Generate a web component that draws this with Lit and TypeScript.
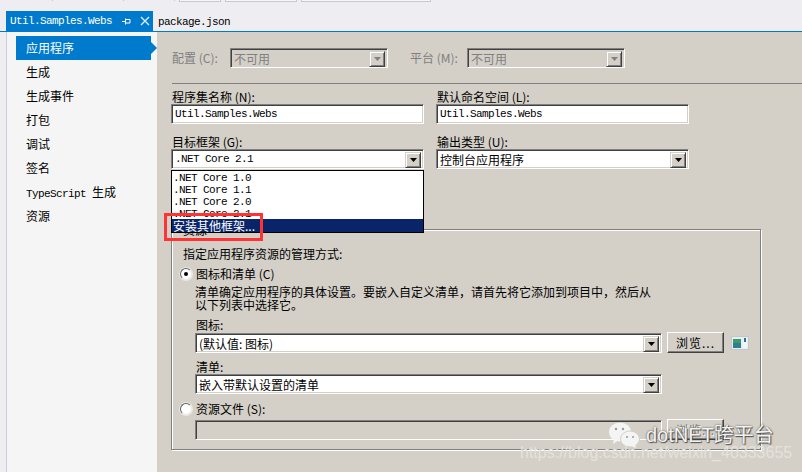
import { LitElement, html, css } from "lit";
import { customElement } from "lit/decorators.js";

const arrow = html`<svg width="7" height="4" viewBox="0 0 7 4"><path d="M0 0h7L3.5 4z" fill="currentColor"/></svg>`;

@customElement("app-root")
export class AppRoot extends LitElement {
  static styles = css`
    :host { display: block; width: 802px; height: 472px; overflow: hidden; position: relative; background: #d4d0c8; color: #000;
      font: 12px/14px "Noto Sans CJK SC", "Liberation Sans", sans-serif; }
    * { box-sizing: border-box; }
    .m { font-family: "Liberation Mono", "Noto Sans CJK SC", monospace; font-size: 11px; letter-spacing: -0.6px; }
    .top { height: 31px; background: #eeeef2; }
    .strip { height: 2px; display: flex; }
    .tick { width: 1px; height: 1px; background: #c8c8d0; }
    .box { height: 2px; background: #f6f6f8; border: 1px solid #c8c8d0; border-top: 0; }
    .tabs { display: flex; padding: 9px 0 0 6px; }
    .tab { width: 147px; height: 20px; background: #007acc; color: #fff; display: flex; align-items: center; padding-left: 4px; }
    .tab .name { width: 112px; }
    .tab svg { display: block; }
    .tab .pin { margin-right: 9px; }
    .other { padding: 3px 0 0 5px; line-height: 16px; }
    .main { display: flex; height: 441px; border-top: 1px solid #007acc; }
    .gut { width: 7px; background: #eeeef2; border-right: 1px solid #ccccde; }
    .side { width: 150px; background: #f5f5f5; padding: 4px 6px 0 9px; }
    .item { height: 24px; padding-left: 10px; line-height: 24px; position: relative; }
    .item.on { background: #007acc; color: #fff; }
    .item.on::after { content: ""; position: absolute; left: 135px; top: 6px; border-left: 6px solid #007acc; border-top: 6px solid transparent; border-bottom: 6px solid transparent; }
    .content { flex: 1; padding-left: 14px; position: relative; }
    .dis { color: #808080; }
    .row1 { display: flex; height: 51px; padding: 16px 0 15px; align-items: center; }
    .row1 .l1 { width: 59px; padding-left: 1px; }
    .row1 .l2 { width: 58px; margin-left: 21px; padding-left: 1px; }
    .sep { height: 1px; background: #808080; margin: 0 0 0 1px; }
    .grid { display: grid; grid-template-columns: 253px 253px; column-gap: 12px; padding-top: 5px; }
    .lab { height: 15px; line-height: 15px; padding-left: 1px; }
    .field { height: 20px; background: #fff; border: 1px solid; border-color: #808080 #fff #fff #808080; box-shadow: inset 1px 1px 0 #404040, inset -1px -1px 0 #d4d0c8; padding: 1px 0 0 3px; line-height: 17px; margin-bottom: 10px; position: relative; display: flex; align-items: center; white-space: nowrap; }
    .combo { padding-right: 20px; }
    .combo.gray { background: #d4d0c8; }
    .btn { position: absolute; right: 2px; top: 2px; width: 16px; height: 16px; background: #d4d0c8; color: #000; border: 1px solid; border-color: #d4d0c8 #404040 #404040 #d4d0c8; box-shadow: inset 1px 1px 0 #fff, inset -1px -1px 0 #808080; display: flex; align-items: center; justify-content: center; }
    .gray .btn { color: #808080; }
    .row1 .field { width: 158px; margin: 0; }
    .group { position: absolute; left: 14px; top: 197px; width: 590px; height: 221px; border: 1px solid #808080; box-shadow: 1px 1px 0 #fff, inset 1px 1px 0 #fff; padding: 17px 0 0 11px; }
    .legend { position: absolute; left: 9px; top: -7px; background: #d4d0c8; padding: 0 2px; }
    .radio { display: flex; align-items: center; gap: 4px; height: 14px; margin-left: -3px; }
    .dot { width: 12px; height: 12px; border-radius: 50%; background: #fff; border: 1px solid; border-color: #606060 #e8e8e8 #e8e8e8 #606060; box-shadow: 0 0 0 1px rgba(255,255,255,.5); display: flex; align-items: center; justify-content: center; flex: none; }
    .dot i { width: 4px; height: 4px; border-radius: 50%; background: #000; display: block; }
    .r1 { margin-top: 6px; }
    .r2 { margin-top: 8px; }
    .indent { padding-left: 12px; width: 566px; }
    .last { margin-top: 3px; }
    .desc { line-height: 13px; margin-top: 4px; }
    .sub { margin-top: 6px; height: 15px; line-height: 15px; padding-left: 1px; }
    .line { display: flex; align-items: center; }
    .line .field { width: 467px; height: 20px; margin: 0; }
    .field.blank { background: #d4d0c8; }
    .push { font: inherit; color: inherit; padding: 0; width: 57px; height: 21px; margin-left: 5px; background: #d4d0c8; border: 1px solid; border-color: #fff #404040 #404040 #fff; box-shadow: inset -1px -1px 0 #808080; display: flex; align-items: center; justify-content: center; letter-spacing: 1px; flex: none; }
    .push.off { color: #808080; text-shadow: 1px 1px 0 #fff; }
    .ico { width: 18px; height: 14px; margin-left: 7px; display: block; flex: none; }
    .list { position: absolute; left: 14px; top: 138px; width: 253px; height: 63px; background: #fff; border: 1px solid #000; padding-top: 1px; z-index: 2; overflow: hidden; }
    .opt { height: 12px; line-height: 12px; padding-left: 1px; }
    .opt.hl { position: absolute; left: 0; right: 0; bottom: 0; height: 13px; background: #0a246a; color: #fff; padding-left: 1px; font: 12px/13px "Noto Sans CJK SC", "Liberation Mono", sans-serif; letter-spacing: 0; }
    .red { position: absolute; left: 164px; top: 213px; width: 99px; height: 28px; border: 3px solid #f33; z-index: 3; }
    .brand { position: absolute; left: 609px; top: 422px; display: flex; align-items: center; gap: 6px; color: #f2f2f2; font: 20px/27px "Liberation Sans", "Noto Sans CJK SC", sans-serif; text-shadow: 0 0 2px #444, 1px 1px 1px #555; z-index: 4; white-space: nowrap; }
    .brand svg { display: block; }
    .url { position: absolute; left: 520px; top: 442px; font: 16px/22px "Liberation Sans", sans-serif; color: #e4e2dd; white-space: nowrap; z-index: 4; }
  `;

  private combo(text: string, mono = false, gray = false) {
    return html`<div class="field combo ${gray ? "gray dis" : ""} ${mono ? "m" : ""}">${text}<span class="btn">${arrow}</span></div>`;
  }

  render() {
    const items = ["应用程序", "生成", "生成事件", "打包", "调试", "签名", "TypeScript 生成", "资源"];
    return html`
      <div class="top">
        <div class="strip">
          <span class="tick" style="margin-left:52px"></span>
          <span class="tick" style="margin-left:70px"></span>
          <span class="tick" style="margin-left:50px"></span>
          <span class="box" style="margin-left:4px;width:42px"></span>
          <span class="box" style="margin-left:4px;width:72px"></span>
          <span class="box" style="margin-left:4px;width:130px"></span>
        </div>
        <div class="tabs">
          <div class="tab m">
            <span class="name">Util.Samples.Webs</span>
            <svg class="pin" width="9" height="9" viewBox="0 0 9 9" fill="none" stroke="#fff"><path d="M0 4.5h3M3.5 1.5v6M3.5 2.5h4.5M3.5 6h4.5M8 2.5v3.5"/></svg>
            <svg width="10" height="10" viewBox="0 0 10 10" stroke="#dcecf8" stroke-width="1.4"><path d="M1 1l8 8M9 1l-8 8"/></svg>
          </div>
          <div class="other m">package.json</div>
        </div>
      </div>
      <div class="main">
        <div class="gut"></div>
        <div class="side">
          ${items.map((t, i) => html`<div class="item ${i === 0 ? "on" : ""}">${i === 6
            ? html`<span class="m">TypeScript </span>生成`
            : t}</div>`)}
        </div>
        <div class="content">
          <div class="row1 dis">
            <span class="l1">配置 (C):</span>
            ${this.combo("不可用", false, true)}
            <span class="l2">平台 (M):</span>
            ${this.combo("不可用", false, true)}
          </div>
          <div class="sep"></div>
          <div class="grid">
            <div>
              <div class="lab">程序集名称 (N):</div>
              <div class="field m">Util.Samples.Webs</div>
              <div class="lab">目标框架 (G):</div>
              ${this.combo(".NET Core 2.1", true)}
            </div>
            <div>
              <div class="lab">默认命名空间 (L):</div>
              <div class="field m">Util.Samples.Webs</div>
              <div class="lab">输出类型 (U):</div>
              ${this.combo("控制台应用程序")}
            </div>
          </div>
          <div class="list m">
            <div class="opt">.NET Core 1.0</div>
            <div class="opt">.NET Core 1.1</div>
            <div class="opt">.NET Core 2.0</div>
            <div class="opt">.NET Core 2.1</div>
            <div class="opt hl">安装其他框架...</div>
          </div>
          <div class="group">
            <span class="legend">资源</span>
            <div>指定应用程序资源的管理方式:</div>
            <div class="radio r1"><span class="dot"><i></i></span>图标和清单 (C)</div>
            <div class="indent">
              <div class="desc">清单确定应用程序的具体设置。要嵌入自定义清单，请首先将它添加到项目中，然后从<br />以下列表中选择它。</div>
              <div class="sub">图标:</div>
              <div class="line">${this.combo("(默认值: 图标)")}<button class="push">浏览...</button>
                <svg class="ico" viewBox="0 0 18 14"><rect x=".5" y=".5" width="17" height="13" fill="#e8eef0" stroke="#c0c8cc"/><rect x="2" y="3" width="8" height="9" fill="#2f7f8f"/><rect x="2" y="3" width="8" height="4" fill="#3a9a70"/><rect x="12" y="3" width="4" height="9" fill="#f4f6f6"/><rect x="13" y="2" width="2" height="4" fill="#2a6f9f"/></svg>
              </div>
              <div class="sub">清单:</div>
              <div class="line">${this.combo("嵌入带默认设置的清单")}</div>
            </div>
            <div class="radio r2"><span class="dot"></span>资源文件 (S):</div>
            <div class="indent last">
              <div class="line"><div class="field blank"></div><button class="push off">浏览...</button></div>
            </div>
          </div>
        </div>
      </div>
      <div class="red"></div>
      <div class="brand">
        <svg width="31" height="27" viewBox="0 0 31 27"><ellipse cx="11" cy="10" rx="11" ry="9.5" fill="#f4f4f4"/><path d="M5 16l-1 6 6-4z" fill="#f4f4f4"/><ellipse cx="21" cy="17" rx="9.5" ry="8" fill="#f4f4f4" stroke="#d4d0c8"/><path d="M26 22l1 4-5-2z" fill="#f4f4f4"/><circle cx="7" cy="7" r="1.2" fill="#999"/><circle cx="14" cy="7" r="1.2" fill="#999"/><circle cx="18" cy="15" r="1" fill="#999"/><circle cx="24" cy="15" r="1" fill="#999"/></svg>
        <span>dotNET跨平台</span>
      </div>
      <div class="url">https://blog.csdn.net/weixin_40333655</div>
    `;
  }
}
